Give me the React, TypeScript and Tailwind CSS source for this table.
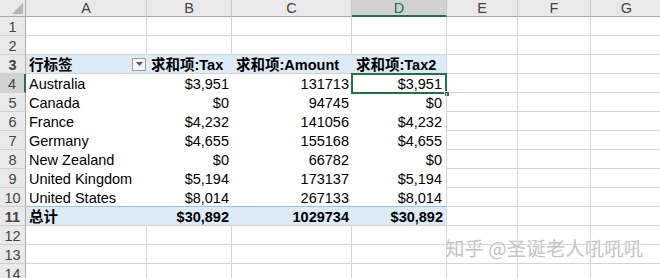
import React from 'react'

const FONT = "font-['Liberation_Sans','Noto_Sans_CJK_SC',sans-serif]"

const colNames = ['A', 'B', 'C', 'D', 'E', 'F', 'G']
const colWidths = ['w-[121px]', 'w-[85px]', 'w-[120px]', 'w-[95px]', 'w-[71px]', 'w-[73px]', 'w-[72px]']

interface PivotRow {
  label: string
  tax: string
  amount: string
  tax2: string
}

const pivotRows: PivotRow[] = [
  { label: 'Australia', tax: '$3,951', amount: '131713', tax2: '$3,951' },
  { label: 'Canada', tax: '$0', amount: '94745', tax2: '$0' },
  { label: 'France', tax: '$4,232', amount: '141056', tax2: '$4,232' },
  { label: 'Germany', tax: '$4,655', amount: '155168', tax2: '$4,655' },
  { label: 'New Zealand', tax: '$0', amount: '66782', tax2: '$0' },
  { label: 'United Kingdom', tax: '$5,194', amount: '173137', tax2: '$5,194' },
  { label: 'United States', tax: '$8,014', amount: '267133', tax2: '$8,014' },
]

function RowHeader({ n, active }: { n: number; active?: boolean }) {
  return (
    <div
      className={`w-[26px] shrink-0 h-full flex items-center justify-center pt-[3px] text-[14.5px] text-[#444] border-b border-[#d0d0d0] ${
        active ? 'bg-[#d2d2d2] border-r-2 border-r-[#217346]' : 'bg-[#e9e9e9] border-r border-r-[#ababab]'
      }`}
    >
      {n}
    </div>
  )
}

function EmptyCell({ i }: { i: number }) {
  return <div className={`${colWidths[i]} shrink-0 h-full border-r border-b border-[#d4d4d4]`} />
}

function EmptyRow({ n }: { n: number }) {
  return (
    <div className="flex h-[19px]">
      <RowHeader n={n} />
      {colNames.map((_, i) => (
        <EmptyCell key={i} i={i} />
      ))}
    </div>
  )
}

function DropButton() {
  return (
    <div className="w-[14px] h-[13px] mr-[1px] bg-[#f4f4f4] border border-[#9c9c9c] flex items-center justify-center">
      <svg width="7" height="4" viewBox="0 0 7 4">
        <path d="M0 0 L7 0 L3.5 4 Z" fill="#555" />
      </svg>
    </div>
  )
}

export default function App() {
  return (
    <div className={`relative w-[660px] h-[278px] overflow-hidden bg-white text-black ${FONT}`}>
      {/* column headers */}
      <div className="flex h-[17px]">
        <div className="w-[26px] shrink-0 h-full bg-[#e9e9e9] border-r border-b border-[#ababab] relative">
          <svg className="absolute right-[2px] bottom-[2px]" width="11" height="11" viewBox="0 0 11 11">
            <path d="M11 0 L11 11 L0 11 Z" fill="#b4b4b4" />
          </svg>
        </div>
        {colNames.map((c, i) => (
          <div
            key={c}
            className={`${colWidths[i]} shrink-0 h-full flex items-center justify-center pt-[2px] text-[14.5px] border-r border-r-[#c8c8c8] ${
              c === 'D'
                ? 'bg-[#d2d2d2] text-[#217346] border-b-2 border-b-[#217346]'
                : 'bg-[#e9e9e9] text-[#444] border-b border-b-[#ababab]'
            }`}
          >
            {c}
          </div>
        ))}
      </div>

      <EmptyRow n={1} />
      <EmptyRow n={2} />

      {/* pivot header */}
      <div className="flex h-[19px] text-[14.5px] font-bold">
        <RowHeader n={3} />
        <div className="w-[121px] shrink-0 h-full bg-[#ddebf7] border-b border-[#d4d4d4] flex items-center justify-between pl-[3px]">
          <span className="pt-[3px]">行标签</span>
          <DropButton />
        </div>
        <div className="w-[85px] shrink-0 h-full bg-[#ddebf7] border-b border-[#d4d4d4] flex items-center pt-[3px] pl-[4px] whitespace-nowrap">
          求和项:Tax
        </div>
        <div className="w-[120px] shrink-0 h-full bg-[#ddebf7] border-b border-[#d4d4d4] flex items-center pt-[3px] pl-[4px] whitespace-nowrap">
          求和项:Amount
        </div>
        <div className="w-[95px] shrink-0 h-full bg-[#ddebf7] border-r border-b border-[#d4d4d4] flex items-center pt-[3px] pl-[4px] whitespace-nowrap">
          求和项:Tax2
        </div>
        {[4, 5, 6].map((i) => (
          <EmptyCell key={i} i={i} />
        ))}
      </div>

      {/* pivot body */}
      {pivotRows.map((r, idx) => {
        const n = idx + 4
        return (
          <div key={r.label} className="flex h-[19px] text-[14.5px]">
            <RowHeader n={n} active={n === 4} />
            <div className="w-[121px] shrink-0 h-full flex items-center pt-[3px] pl-[3px] whitespace-nowrap">{r.label}</div>
            <div className="w-[85px] shrink-0 h-full flex items-center justify-end pt-[3px] pr-[3px]">{r.tax}</div>
            <div className="w-[120px] shrink-0 h-full flex items-center justify-end pt-[3px] pr-[3px]">{r.amount}</div>
            <div className="relative w-[95px] shrink-0 h-full flex items-center justify-end pt-[3px] pr-[4px] border-r border-[#d4d4d4]">
              {r.tax2}
              {n === 4 && (
                <>
                  <div className="absolute left-[-1px] top-[-1px] right-[-1px] bottom-[-1px] border-2 border-[#217346]" />
                  <div className="absolute right-[-4px] bottom-[-4px] w-[6px] h-[6px] bg-[#217346] border border-white" />
                </>
              )}
            </div>
            {[4, 5, 6].map((i) => (
              <EmptyCell key={i} i={i} />
            ))}
          </div>
        )
      })}

      {/* grand total */}
      <div className="flex h-[19px] text-[14.5px] font-bold">
        <RowHeader n={11} />
        <div className="w-[421px] shrink-0 h-[20px] mt-[-1px] flex bg-[#ddebf7] border-t border-t-[#9bc2e6] border-b border-b-[#d4d4d4] border-r border-r-[#d4d4d4]">
          <div className="w-[121px] shrink-0 flex items-center pt-[3px] pl-[3px]">总计</div>
          <div className="w-[85px] shrink-0 flex items-center justify-end pt-[3px] pr-[3px]">$30,892</div>
          <div className="w-[120px] shrink-0 flex items-center justify-end pt-[3px] pr-[3px]">1029734</div>
          <div className="w-[94px] shrink-0 flex items-center justify-end pt-[3px] pr-[3px]">$30,892</div>
        </div>
        {[4, 5, 6].map((i) => (
          <EmptyCell key={i} i={i} />
        ))}
      </div>

      <EmptyRow n={12} />
      <EmptyRow n={13} />
      <EmptyRow n={14} />

      {/* watermark */}
      <div className="absolute left-[445px] top-[238px] text-[19.5px] leading-none text-[#c4c4c4] whitespace-nowrap [text-shadow:0_0_2px_#fff,0_0_1px_#fff] font-['Noto_Sans_CJK_SC',sans-serif]">
        知乎 @圣诞老人吼吼吼
      </div>
    </div>
  )
}
